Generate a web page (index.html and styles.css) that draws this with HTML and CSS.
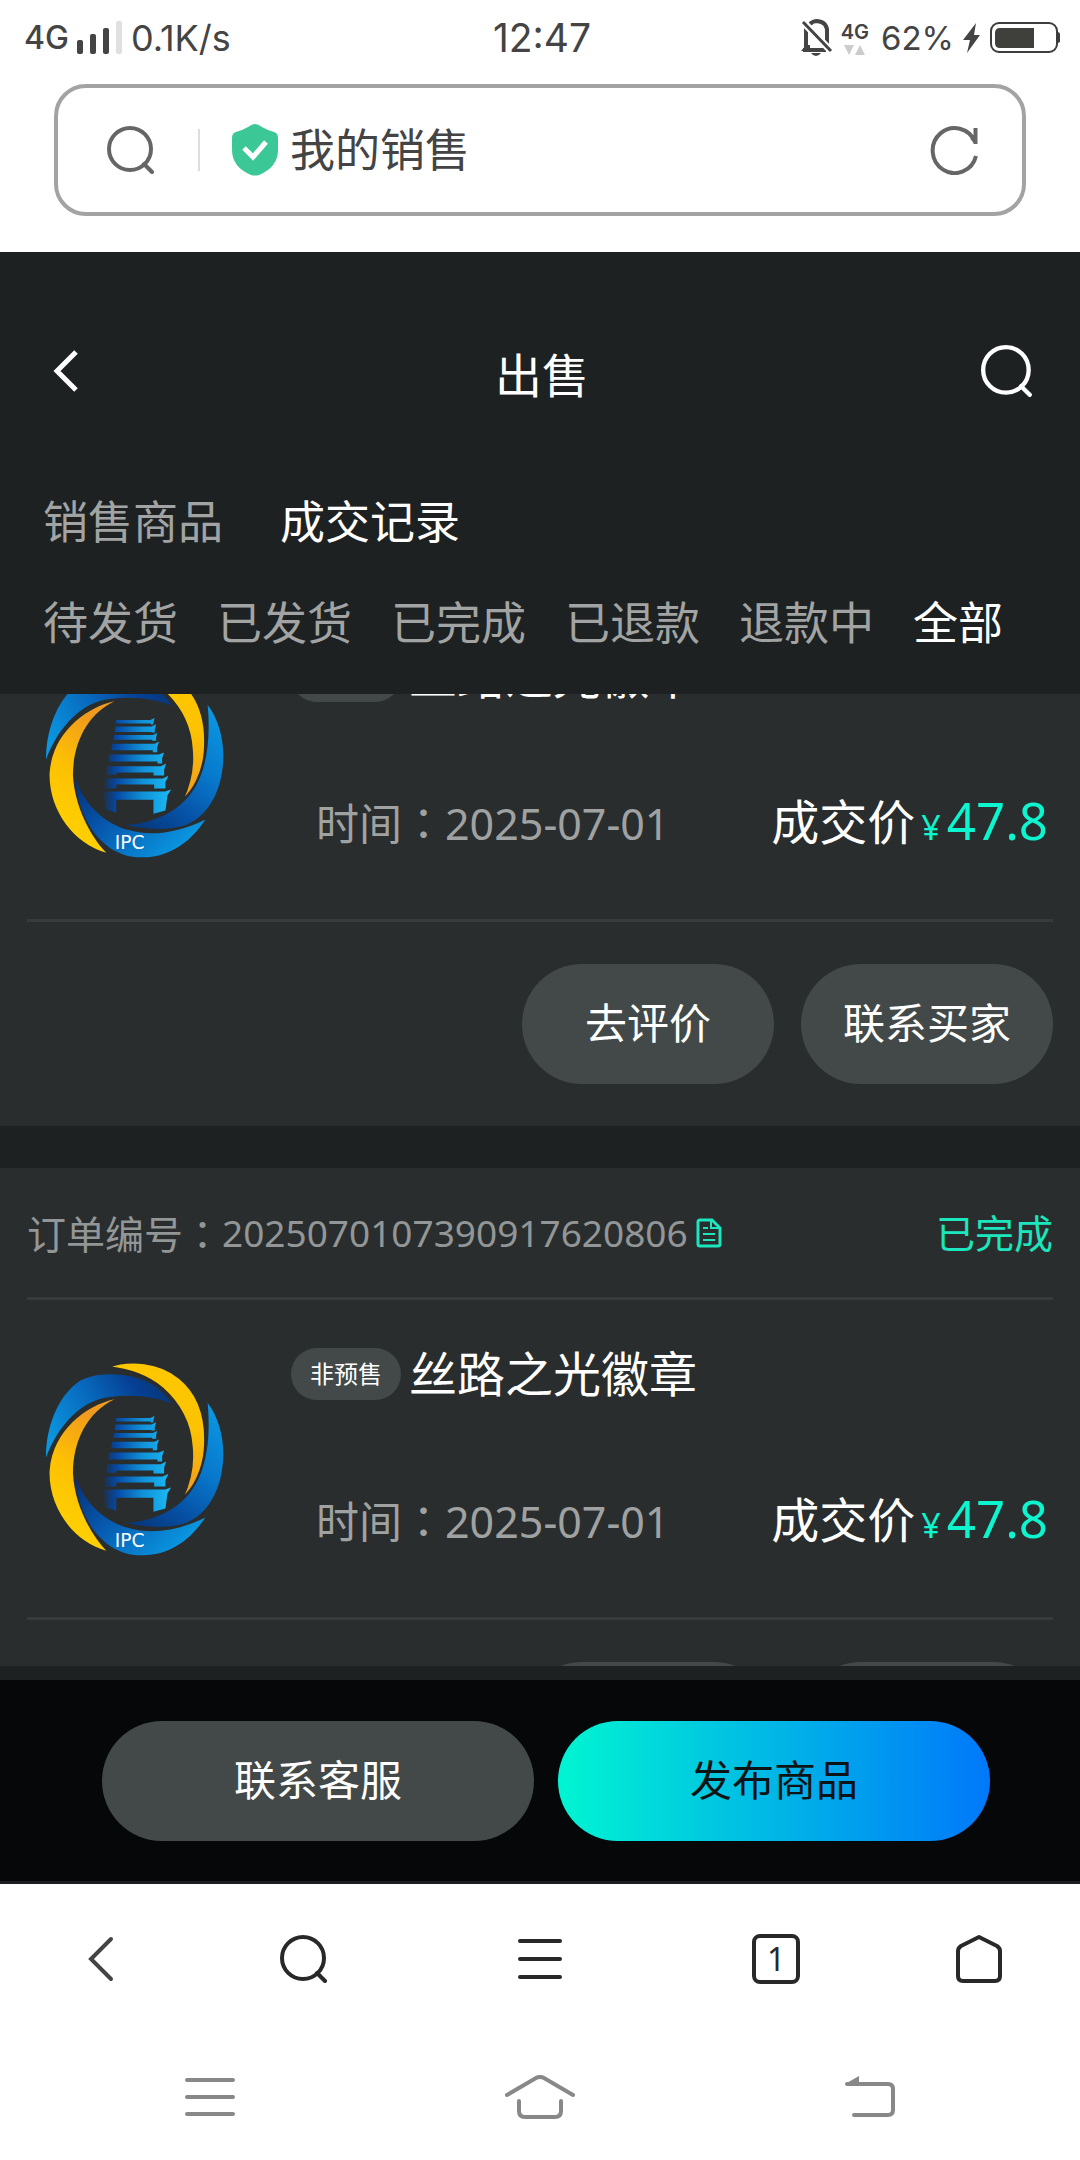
FILE: index.html
```html
<!DOCTYPE html>
<html lang="zh-CN">
<head>
    <meta charset="UTF-8">
    <meta name="viewport" content="width=device-width, initial-scale=1.0">
    <title>我的销售</title>
    <link rel="stylesheet" href="styles.css">
</head>
<body>
    <!-- 公用图形 -->
    <svg class="sprite" width="0" height="0" aria-hidden="true">
        <defs>
            <linearGradient id="gold" x1="0" y1="0" x2="0" y2="1">
                <stop offset="0" stop-color="#fdc800"/>
                <stop offset="0.5" stop-color="#fcc203"/>
                <stop offset="1" stop-color="#f09a1e"/>
            </linearGradient>
            <linearGradient id="goldUp" x1="0" y1="1" x2="0.3" y2="0">
                <stop offset="0" stop-color="#ffd800"/>
                <stop offset="0.6" stop-color="#fdc004"/>
                <stop offset="1" stop-color="#f09a1e"/>
            </linearGradient>
            <linearGradient id="blueTop" x1="0" y1="0.7" x2="1" y2="0.3">
                <stop offset="0" stop-color="#0a96e0"/>
                <stop offset="0.45" stop-color="#0868bc"/>
                <stop offset="0.8" stop-color="#053f93"/>
                <stop offset="1" stop-color="#0a3778"/>
            </linearGradient>
            <linearGradient id="blueRight" x1="0.8" y1="0" x2="0.2" y2="1">
                <stop offset="0" stop-color="#0a96e0"/>
                <stop offset="0.4" stop-color="#0878cc"/>
                <stop offset="0.75" stop-color="#0650a4"/>
                <stop offset="1" stop-color="#063a80"/>
            </linearGradient>
            <linearGradient id="blueBottom" x1="0" y1="0" x2="1" y2="0.6">
                <stop offset="0" stop-color="#062f74"/>
                <stop offset="0.4" stop-color="#0656ac"/>
                <stop offset="1" stop-color="#0a98e2"/>
            </linearGradient>
            <linearGradient id="tower" gradientUnits="userSpaceOnUse" x1="250" y1="0" x2="450" y2="0">
                <stop offset="0" stop-color="#073a86" stop-opacity="0.3"/>
                <stop offset="0.2" stop-color="#0549a4"/>
                <stop offset="0.6" stop-color="#1091d8"/>
                <stop offset="1" stop-color="#1cb8f4"/>
            </linearGradient>
        </defs>
        <symbol id="ipc-logo" viewBox="70 90 550 590">
            <path fill="url(#blueTop)" d="M79 382C78 300 110 200 180 152C240 120 330 130 385 155C420 172 440 195 458 220C410 200 340 190 270 200C190 210 120 275 79 382Z"/>
            <path fill="url(#gold)" stroke="#292d2e" stroke-width="6" d="M265 110C330 86 420 93 480 143C542 193 563 270 556 360C551 422 522 478 489 503C512 455 522 400 517 350C512 270 472 212 428 173C380 133 320 116 265 110Z"/>
            <path fill="url(#goldUp)" d="M285 207C200 225 100 300 90 420C85 530 160 635 260 662C210 610 165 520 160 430C160 330 205 245 285 207Z"/>
            <path fill="url(#blueRight)" d="M565 218C605 270 620 350 608 420C595 500 555 560 490 582C430 598 370 590 318 578C400 575 470 540 510 490C560 430 575 330 565 218Z"/>
            <path fill="url(#blueBottom)" d="M168 440C190 510 250 575 330 595C400 615 480 600 558 562C520 620 460 675 370 676C300 678 250 640 215 590C185 540 168 490 168 440Z"/>
            <g fill="url(#tower)">
                <path d="M290 263H392L405 257L401 277H394V274H288Z"/>
                <path d="M288 283H396L410 276L406 292V301H396V299H285Z"/>
                <path d="M284 308H400L413 302L410 316V326H398V323H281Z"/>
                <path d="M278 335H405L419 328L413 345V360H400V354H275Z"/>
                <path d="M268 367H418L434 361L428 378V394H414V388H266Z"/>
                <path d="M262 402H424L440 394L434 413V430H402V421H290V428H260Z"/>
                <path d="M258 439H430L447 431L438 450V469H404V457H290V469H255Z"/>
                <path d="M252 478H437L455 472L444 490L438 535L402 545V503H290V542L258 532Z"/>
            </g>
            <text class="logo-text" x="286" y="652">IPC</text>
        </symbol>
        <symbol id="icon-search" viewBox="0 0 48 48">
            <circle cx="23" cy="23" r="21" fill="none" stroke="currentColor" stroke-width="4"/>
            <path d="M37 38L45 46" fill="none" stroke="currentColor" stroke-width="4" stroke-linecap="round"/>
        </symbol>
        <symbol id="icon-copy" viewBox="0 0 26 30">
            <path d="M2 4Q2 2 4 2H16L24 10V26Q24 28 22 28H4Q2 28 2 26Z" fill="none" stroke="currentColor" stroke-width="3"/>
            <path d="M15 3V10H23M7 10H12M7 16H19M7 22H19" fill="none" stroke="currentColor" stroke-width="2"/>
        </symbol>
    </svg>

    <div class="status-bar">
        <div class="status-left">
            <span class="net">4G</span>
            <svg width="46" height="34" viewBox="0 0 46 34">
                <rect x="0" y="19" width="6" height="14" rx="2" fill="#444"/>
                <rect x="13" y="13" width="6" height="20" rx="2" fill="#444"/>
                <rect x="26" y="7" width="6" height="26" rx="2" fill="#444"/>
                <rect x="39" y="0" width="6" height="33" rx="2" fill="#e0e0e0"/>
            </svg>
            <span class="speed">0.1K/s</span>
        </div>
        <div class="clock">12:47</div>
        <div class="status-right">
            <svg width="32" height="38" viewBox="0 0 32 38">
                <path d="M5 8V28M9 5Q12 2 16 2Q27 3 26 14V26M2 31H25" fill="none" stroke="#444" stroke-width="4"/>
                <path d="M0 32L5 26H9V32Z" fill="#444"/>
                <path d="M2 3L30 32" stroke="#fff" stroke-width="7"/>
                <path d="M2 3L30 32" stroke="#444" stroke-width="3"/>
                <path d="M10 34H20Q18 37 15 37Q12 37 10 34Z" fill="#444"/>
            </svg>
            <div class="net-small">
                <span>4G</span>
                <svg width="22" height="12" viewBox="0 0 22 12">
                    <path d="M0 1H10L5 11ZM11 11H21L16 1Z" fill="#ccc"/>
                </svg>
            </div>
            <span class="percent">62%</span>
            <svg width="20" height="30" viewBox="0 0 20 30">
                <path d="M14 0L1 17H8L5 30L18 12H12Z" fill="#444"/>
            </svg>
            <svg width="70" height="32" viewBox="0 0 70 32">
                <rect x="1" y="1" width="66" height="29" rx="8" fill="none" stroke="#3d3d3b" stroke-width="2"/>
                <path d="M10 6H44V26H10Q5 26 5 21V11Q5 6 10 6Z" fill="#3f403c"/>
                <path d="M68 10Q71 11 71 15.500Q71 20 68 21Z" fill="#3d3d3b"/>
            </svg>
        </div>
    </div>

    <div class="address-wrap">
        <div class="address-bar">
            <svg class="address-search" width="48" height="48"><use href="#icon-search"/></svg>
            <span class="divider"></span>
            <svg width="46" height="52" viewBox="0 0 46 52">
                <path d="M23 0Q26 0 30 3Q35 6 42 8Q46 9 46 14V26Q46 43 27 51Q23 52 19 51Q0 43 0 26V14Q0 9 4 8Q11 6 16 3Q20 0 23 0Z" fill="#3cc896"/>
                <path d="M12 24L21 33L34 18" fill="none" stroke="#fff" stroke-width="5"/>
            </svg>
            <span class="address-title">我的销售</span>
            <button class="icon-btn" aria-label="刷新">
                <svg width="50" height="50" viewBox="0 0 50 50">
                    <path d="M46 31A22 22.500 0 1 1 45 17M45.500 3V19" fill="none" stroke="#666" stroke-width="4"/>
                    <path d="M40 14L47 19V12Z" fill="#666"/>
                </svg>
            </button>
        </div>
    </div>

    <div class="app">
        <div class="top">
            <div class="title-bar">
                <button class="icon-btn" aria-label="返回">
                    <svg width="26" height="42" viewBox="0 0 26 42">
                        <path d="M23 2L4 21L23 40" fill="none" stroke="#fff" stroke-width="5"/>
                    </svg>
                </button>
                <h1>出售</h1>
                <button class="icon-btn" aria-label="搜索">
                    <svg width="52" height="52"><use href="#icon-search"/></svg>
                </button>
            </div>
            <div class="tabs">
                <a href="#">销售商品</a>
                <a href="#" class="active">成交记录</a>
            </div>
            <div class="filters">
                <a href="#">待发货</a>
                <a href="#">已发货</a>
                <a href="#">已完成</a>
                <a href="#">已退款</a>
                <a href="#">退款中</a>
                <a href="#" class="active">全部</a>
            </div>
        </div>

        <div class="order-list" id="orderList">
            <div class="order">
                <div class="order-head">
                    <span>订单编号<span class="colon" lang="zh-TW">：</span></span>
                    <span class="order-no">2025070107390917620806</span>
                    <button class="icon-btn copy" aria-label="复制"><svg width="26" height="30"><use href="#icon-copy"/></svg></button>
                    <span class="state">已完成</span>
                </div>
                <div class="order-item">
                    <svg class="thumb" width="183" height="197"><use href="#ipc-logo"/></svg>
                    <div class="info">
                        <div class="name"><span class="tag">非预售</span>丝路之光徽章</div>
                        <div class="deal">
                            <span class="time">时间<span class="colon" lang="zh-TW">：</span>2025-07-01</span>
                            <span class="deal-price">成交价<span class="yen">¥</span><span class="price">47.8</span></span>
                        </div>
                    </div>
                </div>
                <div class="order-actions">
                    <button class="btn">去评价</button>
                    <button class="btn">联系买家</button>
                </div>
            </div>

            <div class="order">
                <div class="order-head">
                    <span>订单编号<span class="colon" lang="zh-TW">：</span></span>
                    <span class="order-no">2025070107390917620806</span>
                    <button class="icon-btn copy" aria-label="复制"><svg width="26" height="30"><use href="#icon-copy"/></svg></button>
                    <span class="state">已完成</span>
                </div>
                <div class="order-item">
                    <svg class="thumb" width="183" height="197"><use href="#ipc-logo"/></svg>
                    <div class="info">
                        <div class="name"><span class="tag">非预售</span>丝路之光徽章</div>
                        <div class="deal">
                            <span class="time">时间<span class="colon" lang="zh-TW">：</span>2025-07-01</span>
                            <span class="deal-price">成交价<span class="yen">¥</span><span class="price">47.8</span></span>
                        </div>
                    </div>
                </div>
                <div class="order-actions">
                    <button class="btn">去评价</button>
                    <button class="btn">联系买家</button>
                </div>
            </div>
        </div>

        <div class="bottom-bar">
            <button class="btn">联系客服</button>
            <button class="btn primary">发布商品</button>
        </div>
    </div>

    <div class="browser-nav">
        <button class="icon-btn" aria-label="后退">
            <svg width="26" height="46" viewBox="0 0 26 46">
                <path d="M23 3L3 23L23 43" fill="none" stroke="#444" stroke-width="4" stroke-linecap="round"/>
            </svg>
        </button>
        <button class="icon-btn" aria-label="搜索"><svg width="48" height="48"><use href="#icon-search"/></svg></button>
        <button class="icon-btn" aria-label="菜单">
            <svg width="44" height="42" viewBox="0 0 44 42">
                <path d="M2 3H42M2 21H42M2 39H42" stroke="#282828" stroke-width="4" stroke-linecap="round"/>
            </svg>
        </button>
        <button class="icon-btn pages" aria-label="标签页">1</button>
        <button class="icon-btn" aria-label="主页">
            <svg width="46" height="50" viewBox="0 0 46 50">
                <path d="M23 3L41 12Q44 14 44 17V42Q44 47 39 47H7Q2 47 2 42V17Q2 14 5 12Z" fill="none" stroke="#282828" stroke-width="4" stroke-linejoin="round"/>
            </svg>
        </button>
    </div>

    <div class="system-nav">
        <button class="icon-btn" aria-label="最近任务">
            <svg width="50" height="40" viewBox="0 0 50 40">
                <path d="M2 3H48M2 20H48M2 37H48" stroke="#888" stroke-width="4" stroke-linecap="round"/>
            </svg>
        </button>
        <button class="icon-btn" aria-label="桌面">
            <svg width="70" height="44" viewBox="0 0 70 44">
                <path d="M2 20L31 3Q35 1 39 3L68 20M14 26V36Q14 42 20 42H50Q56 42 56 36V26" fill="none" stroke="#888" stroke-width="4" stroke-linecap="round"/>
            </svg>
        </button>
        <button class="icon-btn" aria-label="返回">
            <svg width="52" height="44" viewBox="0 0 52 44">
                <path d="M3 9H44Q49 9 49 14V35Q49 40 44 40H10" fill="none" stroke="#888" stroke-width="4" stroke-linecap="round"/>
                <path d="M1 9L15 1V9Z" fill="#888"/>
            </svg>
        </button>
    </div>

    <script>
        // 恢复列表的滚动位置
        document.getElementById('orderList').scrollTop = 224;
    </script>
</body>
</html>
```

FILE: styles.css
```css
* {
    margin: 0;
    padding: 0;
    box-sizing: border-box;
}

body {
    height: 100vh;
    display: flex;
    flex-direction: column;
    overflow: hidden;
    font-family: "Noto Sans", "Noto Sans CJK SC", sans-serif;
    background: #fff;
    color: #444;
}

svg {
    display: block;
    flex: none;
}

.sprite {
    position: absolute;
}

a {
    color: inherit;
    text-decoration: none;
}

button {
    border: none;
    background: none;
    font-family: inherit;
    color: inherit;
    cursor: pointer;
}

.icon-btn {
    display: flex;
    align-items: center;
    justify-content: center;
}

/* 状态栏 */
.status-bar {
    height: 84px;
    padding: 0 20px 8px 24px;
    display: grid;
    grid-template-columns: 1fr auto 1fr;
    align-items: center;
    font-family: Inter, sans-serif;
    line-height: 40px;
}

.status-left,
.status-right {
    display: flex;
    align-items: center;
    gap: 8px;
}

.status-right {
    justify-content: flex-end;
}

.net {
    font-size: 32px;
    font-weight: 500;
}

.speed {
    font-size: 36px;
}

.percent {
    margin-left: 4px;
    font-size: 33px;
}

.clock {
    font-size: 39px;
}

.net-small {
    display: flex;
    flex-direction: column;
    align-items: center;
    font-size: 20px;
    font-weight: 600;
    line-height: 24px;
}

/* 地址栏 */
.address-wrap {
    padding: 0 54px 36px;
}

.address-bar {
    height: 132px;
    padding: 0 42px 0 49px;
    border: 4px solid #a3a3a3;
    border-radius: 32px;
    display: flex;
    align-items: center;
}

.address-search {
    color: #666;
}

.divider {
    width: 2px;
    height: 42px;
    margin: 0 32px 0 43px;
    background: #ddd;
}

.address-title {
    flex: 1;
    margin-left: 12px;
    font-size: 45px;
    line-height: 60px;
}

/* 页面主体 */
.app {
    flex: 1;
    min-height: 0;
    display: flex;
    flex-direction: column;
    background: #1e2122;
    color: #fff;
    border-bottom: 3px solid #1c1d20;
}

.top {
    padding: 80px 43px 41px;
}

.title-bar {
    height: 84px;
    padding: 0 4px 6px 10px;
    display: flex;
    align-items: center;
    justify-content: space-between;
}

.title-bar h1 {
    padding: 8px 0 0 24px;
    font-size: 47px;
    line-height: 64px;
    font-weight: 400;
}

.tabs,
.filters {
    display: flex;
    gap: 39px;
    font-size: 45px;
    line-height: 60px;
    color: #a2a4a4;
}

.tabs {
    gap: 57px;
    margin: 76px 0 41px;
}

.active {
    color: #fff;
}

.order-list {
    flex: 1;
    min-height: 0;
    margin-bottom: 14px;
    overflow-y: auto;
    scrollbar-width: none;
}

.order {
    padding: 0 27px;
    margin-bottom: 42px;
    background: #292d2e;
}

.order-head {
    height: 132px;
    border-bottom: 3px solid #373b3c;
    display: flex;
    align-items: center;
    font-size: 39px;
    line-height: 52px;
    color: #939696;
}

.order-no {
    font-size: 37px;
}

/* 冒号居中显示 */
.colon {
    font-family: "Noto Sans CJK TC", sans-serif;
}

.copy {
    margin-left: 8px;
    color: #1be6be;
}

.state {
    margin-left: auto;
    color: #1be6be;
}

.order-item {
    height: 320px;
    border-bottom: 3px solid #373b3c;
    display: flex;
    align-items: center;
}

.thumb {
    margin: 0 65px 0 16px;
}

.logo-text {
    font-family: "DejaVu Sans", sans-serif;
    font-size: 56px;
    fill: #fff;
}

.info {
    flex: 1;
    height: 100%;
    padding: 44px 5px 62px 0;
    display: flex;
    flex-direction: column;
    justify-content: space-between;
}

.name {
    display: flex;
    align-items: center;
    gap: 8px;
    font-size: 48px;
    line-height: 60px;
}

.tag {
    padding: 0 19px;
    border-radius: 26px;
    background: #424948;
    font-size: 24px;
    line-height: 52px;
}

.deal {
    padding-left: 25px;
    display: flex;
    align-items: baseline;
    justify-content: space-between;
    line-height: 60px;
}

.time {
    font-size: 43px;
    color: #a0a2a2;
}

.deal-price {
    font-size: 48px;
}

.yen {
    margin: 0 6px;
    font-size: 34px;
    color: #0cf5cf;
}

.price {
    font-size: 51px;
    color: #0cf5cf;
}

.order-actions {
    padding: 42px 0;
    display: flex;
    justify-content: flex-end;
    gap: 27px;
}

.btn {
    width: 252px;
    height: 120px;
    padding-bottom: 3px;
    border-radius: 60px;
    background: #424948;
    color: #fff;
    font-size: 42px;
    line-height: 60px;
}

.bottom-bar {
    padding: 41px 0 40px 12px;
    display: flex;
    justify-content: center;
    gap: 24px;
    background: #050708;
}

.bottom-bar .btn {
    width: 40vw;
}

.bottom-bar .primary {
    background: linear-gradient(90deg, #00f5d2, #0078fa);
    color: #0c1416;
}

/* 浏览器工具栏 */
.browser-nav {
    height: 150px;
    display: grid;
    grid-template-columns: 3fr 3fr 4fr 3fr 3fr;
    align-items: center;
    justify-items: center;
    color: #282828;
}

.pages {
    width: 48px;
    height: 50px;
    border: 4px solid #282828;
    border-radius: 8px;
    font-size: 32px;
    line-height: 40px;
}

/* 系统导航 */
.system-nav {
    height: 126px;
    padding: 0 45px;
    display: grid;
    grid-template-columns: repeat(3, 1fr);
    align-items: center;
    justify-items: center;
}
```
